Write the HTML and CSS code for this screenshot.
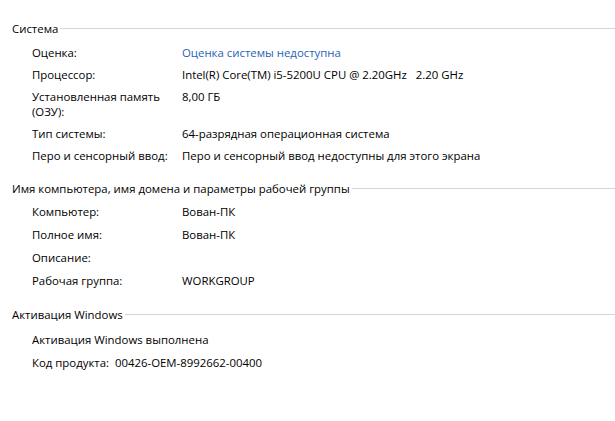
FILE: index.html
```html
<!DOCTYPE html>
<html lang="ru">
<head>
    <meta charset="UTF-8">
    <title>Система</title>
    <link rel="stylesheet" href="styles.css">
</head>
<body>

    <!-- Система -->
    <div class="group">
        <div class="group-title"><span>Система</span></div>
        <div class="row"><div class="label">Оценка:</div><div class="value"><a class="link" href="#">Оценка системы недоступна</a></div></div>
        <div class="row"><div class="label">Процессор:</div><div class="value">Intel(R) Core(TM) i5-5200U CPU @ 2.20GHz&nbsp;&nbsp; 2.20 GHz</div></div>
        <div class="row"><div class="label">Установленная память (ОЗУ):</div><div class="value">8,00 ГБ</div></div>
        <div class="row"><div class="label">Тип системы:</div><div class="value">64-разрядная операционная система</div></div>
        <div class="row"><div class="label">Перо и сенсорный ввод:</div><div class="value">Перо и сенсорный ввод недоступны для этого экрана</div></div>
    </div>

    <!-- Имя компьютера -->
    <div class="group loose">
        <div class="group-title"><span>Имя компьютера, имя домена и параметры рабочей группы</span></div>
        <div class="row"><div class="label">Компьютер:</div><div class="value">Вован-ПК</div></div>
        <div class="row"><div class="label">Полное имя:</div><div class="value">Вован-ПК</div></div>
        <div class="row"><div class="label">Описание:</div><div class="value"></div></div>
        <div class="row"><div class="label">Рабочая группа:</div><div class="value">WORKGROUP</div></div>
    </div>

    <!-- Активация -->
    <div class="group loose activation">
        <div class="group-title"><span>Активация Windows</span></div>
        <div class="row"><div class="label wide">Активация Windows выполнена</div></div>
        <div class="row"><div class="label wide">Код продукта:&nbsp;&nbsp;00426-OEM-8992662-00400</div></div>
    </div>

</body>
</html>
```

FILE: styles.css
```css
/* 全体 */
body {
    margin: 0;
    padding: 21px 0 0 12px;
    background: #fff;
    color: #000;
    font-family: 'Open Sans', 'Noto Sans', sans-serif;
    font-size: 11.4px;
    line-height: 15px;
}

/* グループ */
.group {
    margin-bottom: 15px;
}

.group-title {
    display: flex;
    align-items: center;
    margin-bottom: 5px;
}

.group.loose .group-title {
    margin-bottom: 4px;
}

.group.activation .group-title {
    margin-bottom: 6px;
}

.group-title::after {
    content: "";
    flex: 1;
    height: 1px;
    background: #d5d5d5;
    margin-left: 2px;
}

/* 行 */
.row {
    display: flex;
    padding: 4px 0 3px 20px;
}

.group.loose .row {
    padding-bottom: 4px;
}

.label {
    width: 150px;
    flex-shrink: 0;
}

.label.wide {
    width: auto;
}

.link {
    color: #1f63b8;
    text-decoration: none;
}
```
